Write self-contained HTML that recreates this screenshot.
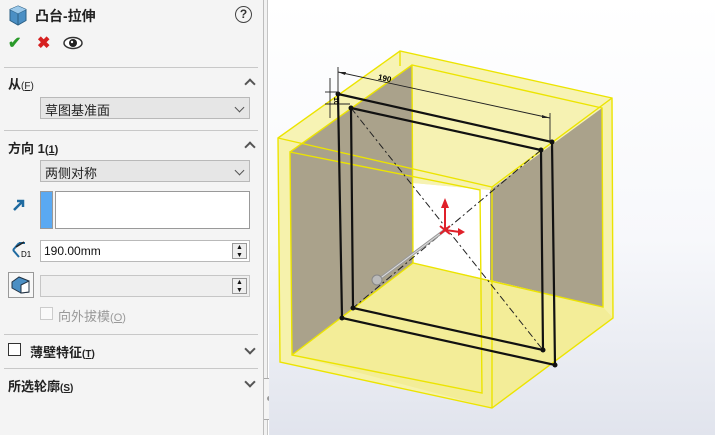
<!DOCTYPE html>
<html><head><meta charset="utf-8"><style>
*{margin:0;padding:0;box-sizing:border-box}
body{width:715px;height:435px;overflow:hidden;position:relative;font-family:"Liberation Sans","Noto Sans CJK SC",sans-serif;background:#fff}
#panel{position:absolute;left:0;top:0;width:264px;height:435px;background:#f4f4f4;border-right:1px solid #bdbdbd}
.a{position:absolute}
.sep{position:absolute;left:4px;width:254px;height:1px;background:#c8c8c8}
.h{position:absolute;font-size:13px;font-weight:bold;color:#222}
.dd{position:absolute;left:40px;width:210px;height:22px;background:#e6e6e6;border:1px solid #b9b9b9;font-size:13px;padding:2px 4px;color:#222}
.chev{position:absolute;right:6px;top:6px;width:7px;height:7px;border-right:1.3px solid #555;border-bottom:1.3px solid #555;transform:rotate(45deg)}
.up{position:absolute;width:8px;height:8px;border-left:2px solid #555;border-top:2px solid #555;transform:rotate(45deg)}
.dn{position:absolute;width:8px;height:8px;border-right:2px solid #555;border-bottom:2px solid #555;transform:rotate(45deg)}
.inp{position:absolute;left:40px;width:210px;height:22px;background:#fff;border:1px solid #b9b9b9;font-size:12px;padding:3px 3px;color:#111}
.spin{position:absolute;right:2px;top:2px;width:15px;height:16px;border:1px solid #999;background:#eee}
</style></head><body>
<div id="panel">
<svg class="a" style="left:8px;top:5px" width="20" height="21" viewBox="0 0 20 21"><path d="M10 1 L18 4.5 L18 15.5 L10 20 L2 15.5 L2 4.5Z" fill="#4b8fc4" stroke="#2b5f85"/><path d="M2 4.5 L10 8.5 L18 4.5 M10 8.5 L10 20" stroke="#2b5f85" fill="none"/><path d="M2 4.5 L10 1 L18 4.5 L10 8.5Z" fill="#9cc9ea"/></svg>
<div class="a" style="left:35px;top:6px;font-size:14px;font-weight:bold;color:#222">凸台-拉伸</div>
<div class="a" style="left:235px;top:6px;width:17px;height:17px;border:1.5px solid #444;border-radius:50%;font-size:12px;font-weight:bold;text-align:center;line-height:14px;color:#333">?</div>
<div class="a" style="left:8px;top:33px;color:#2a9a2a;font-size:16px;font-weight:bold">✔</div>
<div class="a" style="left:37px;top:33px;color:#d62020;font-size:16px;font-weight:bold">✖</div>
<svg class="a" style="left:63px;top:36px" width="20" height="14"><ellipse cx="10" cy="7" rx="9" ry="5.5" fill="#fff" stroke="#333" stroke-width="1.5"/><circle cx="10" cy="7" r="4" fill="#222"/><circle cx="9" cy="6" r="1.2" fill="#fff"/></svg>
<div class="sep" style="top:67px"></div>
<div class="h" style="left:8px;top:74px">从<span style="font-size:10px;font-weight:normal">(<u>F</u>)</span></div>
<div class="up" style="left:246px;top:80px"></div>
<div class="dd" style="top:97px">草图基准面<div class="chev"></div></div>
<div class="sep" style="top:130px"></div>
<div class="h" style="left:8px;top:138px">方向 1<span style="font-size:11px">(<u>1</u>)</span></div>
<div class="up" style="left:246px;top:143px"></div>
<div class="dd" style="top:160px">两侧对称<div class="chev"></div></div>
<svg class="a" style="left:12px;top:198px" width="14" height="14"><path d="M2 12 L11 3 M5 3 L11 3 L11 9" stroke="#1f6aa0" stroke-width="2.5" fill="none"/></svg>
<div class="a" style="left:40px;top:191px;width:13px;height:38px;background:#5aa9f2;border:1px solid #999"></div>
<div class="a" style="left:55px;top:191px;width:195px;height:38px;background:#fff;border:1px solid #999"></div>
<svg class="a" style="left:10px;top:240px" width="22" height="20"><path d="M3 10 L9 3 M3 10 L9 17 M9 3 L15 3" stroke="#1f6aa0" stroke-width="2" fill="none"/><path d="M6 7 L14 2" stroke="#222" stroke-width="1.5"/><text x="11" y="17" font-size="8" font-family="Liberation Sans">D1</text></svg>
<div class="inp" style="top:240px">190.00mm<div class="spin"><div style="font-size:7px;line-height:8px;text-align:center">▲<br>▼</div></div></div>
<div class="a" style="left:8px;top:272px;width:26px;height:26px;border:1px solid #999;background:#f7f7f7"></div>
<svg class="a" style="left:11px;top:276px" width="20" height="18"><path d="M1 6 L8 1 L18 5 L18 16 L10 17 L1 12Z" fill="#4b8fc4" stroke="#234"/><path d="M10 9 L18 5 L18 16 L10 17Z" fill="#fff" stroke="#234"/></svg>
<div class="inp" style="top:275px;background:#efefef;border-color:#c6c6c6"><div class="spin"><div style="font-size:7px;line-height:8px;text-align:center">▲<br>▼</div></div></div>
<div class="a" style="left:40px;top:307px;width:13px;height:13px;border:1px solid #ccc;background:#fafafa"></div>
<div class="a" style="left:58px;top:306px;font-size:13px;color:#999">向外拔模<span style="font-size:11px">(<u>O</u>)</span></div>
<div class="sep" style="top:334px"></div>
<div class="a" style="left:8px;top:343px;width:13px;height:13px;border:1.5px solid #333;background:#fff"></div>
<div class="h" style="left:30px;top:342px">薄壁特征<span style="font-size:10px">(<u>T</u>)</span></div>
<div class="dn" style="left:246px;top:345px"></div>
<div class="sep" style="top:368px"></div>
<div class="h" style="left:8px;top:376px">所选轮廓<span style="font-size:10px">(<u>S</u>)</span></div>
<div class="dn" style="left:246px;top:378px"></div>
</div>
<div class="a" style="left:264px;top:0;width:4px;height:435px;background:#f2f2f2;border-right:1px solid #c5c5c5"></div>
<div class="a" style="left:264px;top:378px;width:8px;height:42px;background:#f4f4f4;border:1px solid #aaa;border-left:none"></div>
<div class="a" style="left:267px;top:396px;width:5px;height:5px;border-radius:50%;background:#999"></div>
<svg class="a" style="left:269px;top:0" width="446" height="435" viewBox="269 0 446 435">
<defs><linearGradient id="bg" x1="0" y1="0" x2="0" y2="1"><stop offset="0" stop-color="#ffffff"/><stop offset="0.55" stop-color="#f7f8fb"/><stop offset="1" stop-color="#e1e4ed"/></linearGradient></defs>
<rect x="269" y="0" width="446" height="435" fill="url(#bg)"/>
<polygon points="278,138 400,51 612,98 613,318 492,408 280,362" fill="#f6f2ac"/>
<polygon points="278,138 400,51 612,98 492,187" fill="#f7f3b4"/>
<polygon points="290,152 412,65 413,263 292,355" fill="#aaa28b"/>
<polygon points="490,190 602,108 603,307 490,280" fill="#aaa28b"/>
<polygon points="413,183 490,190 490,280 413,263" fill="#ffffff"/>
<polygon points="413,263 490,280 603,307 613,318 492,408 292,355" fill="#f2ec94" opacity="0.85"/>
<polygon points="413,65 602,108 490,190 413,183" fill="#f6f2b2"/>
<g stroke="#ece400" stroke-width="1.4" fill="none">
<polygon points="278,138 400,51 612,98 613,318 492,408 280,362"/>
<polyline points="278,138 492,187 612,98"/><line x1="492" y1="187" x2="492" y2="408"/>
<polygon points="290,152 480,190 482,393 292,355"/>
<polyline points="290,152 412,65 602,108 603,307 413,263 292,355"/>
<line x1="412" y1="65" x2="413" y2="263"/>
<line x1="400" y1="51" x2="400" y2="66"/>
</g>
<g stroke="#111" stroke-width="2.2" fill="none">
<polygon points="338,94 552,142 555,365 342,318"/>
<polygon points="351,108 541,150 543,350 353,308"/>
</g>
<g stroke="#222" stroke-width="1" stroke-dasharray="7,3,2,3">
<line x1="351" y1="108" x2="543" y2="350"/><line x1="541" y1="150" x2="353" y2="308"/>
</g>
<g fill="#111"><circle cx="338" cy="94" r="2.5"/><circle cx="552" cy="142" r="2.5"/><circle cx="555" cy="365" r="2.5"/><circle cx="342" cy="318" r="2.5"/><circle cx="351" cy="108" r="2.5"/><circle cx="541" cy="150" r="2.5"/><circle cx="543" cy="350" r="2.5"/><circle cx="353" cy="308" r="2.5"/></g>
<g stroke="#222" stroke-width="0.9" fill="none"><line x1="338" y1="72" x2="550" y2="118"/><line x1="338" y1="67" x2="338" y2="94"/><line x1="550" y1="113" x2="550" y2="142"/><line x1="330" y1="78" x2="330" y2="118"/><line x1="325" y1="92" x2="338" y2="92"/><line x1="325" y1="104" x2="350" y2="104"/></g>
<polygon points="338,72 346,72 345,75" fill="#222"/><polygon points="550,118 542,115 542,118" fill="#222"/>
<text x="378" y="80" font-size="8" font-weight="bold" font-family="Liberation Sans" transform="rotate(12 380 78)">190</text>
<text x="0" y="0" font-size="7" font-weight="bold" font-family="Liberation Sans" transform="translate(334,97) rotate(90)">10</text>
<line x1="445" y1="230" x2="378" y2="280" stroke="#999" stroke-width="3"/>
<line x1="445" y1="230" x2="378" y2="280" stroke="#ddd" stroke-width="1"/>
<circle cx="377" cy="280" r="5" fill="#bbb" stroke="#888"/>
<g stroke="#e0202a" stroke-width="2"><line x1="445" y1="230" x2="445" y2="204"/><line x1="445" y1="230" x2="460" y2="232"/><line x1="440" y1="226" x2="450" y2="234"/><line x1="450" y1="226" x2="440" y2="234"/></g>
<polygon points="441,208 445,198 449,208" fill="#e0202a"/><polygon points="458,228 465,232 458,236" fill="#e0202a"/>
</svg>
</body></html>
